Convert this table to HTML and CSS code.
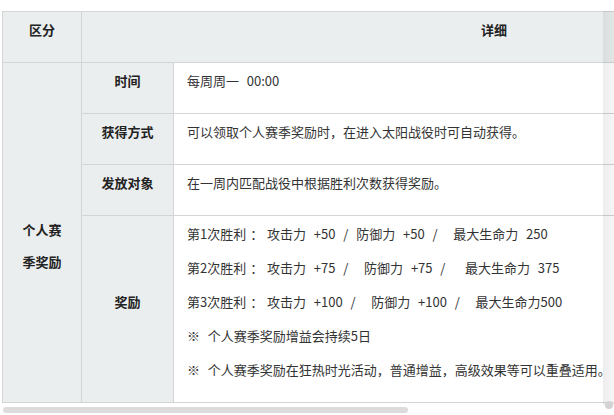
FILE: index.html
```html
<!DOCTYPE html>
<html lang="zh-CN">
<head>
<meta charset="utf-8">
<link rel="stylesheet" href="styles.css">
</head>
<body>
<div class="frame">
  <div class="scroller">
    <table class="info">
      <colgroup>
        <col class="c1"><col class="c2"><col class="c3">
      </colgroup>
      <tr class="head">
        <th class="lab"><p>区分</p></th>
        <th class="lab" colspan="2"><p>详细</p></th>
      </tr>
      <tr>
        <td class="lab group" rowspan="4"><p>个人赛</p><p>季奖励</p></td>
        <td class="lab"><p>时间</p></td>
        <td class="val"><p>每周周一&nbsp; 00:00</p></td>
      </tr>
      <tr>
        <td class="lab"><p>获得方式</p></td>
        <td class="val"><p>可以领取个人赛季奖励时，在进入太阳战役时可自动获得。</p></td>
      </tr>
      <tr>
        <td class="lab"><p>发放对象</p></td>
        <td class="val"><p>在一周内匹配战役中根据胜利次数获得奖励。</p></td>
      </tr>
      <tr>
        <td class="lab"><p>奖励</p></td>
        <td class="val">
          <p>第1次胜利 ： 攻击力&nbsp; +50&nbsp; /&nbsp; 防御力&nbsp; +50&nbsp; /&nbsp;&nbsp;&nbsp; 最大生命力&nbsp; 250</p>
          <p>第2次胜利 ： 攻击力&nbsp; +75&nbsp; /&nbsp;&nbsp;&nbsp; 防御力&nbsp; +75&nbsp; /&nbsp;&nbsp;&nbsp;&nbsp; 最大生命力&nbsp; 375</p>
          <p>第3次胜利 ： 攻击力&nbsp; +100&nbsp; /&nbsp;&nbsp;&nbsp; 防御力&nbsp; +100&nbsp; /&nbsp;&nbsp;&nbsp; 最大生命力500</p>
          <p>※&nbsp; 个人赛季奖励增益会持续5日</p>
          <p>※&nbsp; 个人赛季奖励在狂热时光活动，普通增益，高级效果等可以重叠适用。</p>
        </td>
      </tr>
    </table>
  </div>
  <div class="hbar"></div>
  <div class="fade"></div>
  <div class="dot"></div>
</div>
</body>
</html>
```

FILE: styles.css
```css
html, body {
  margin: 0;
  padding: 0;
  background: #fff;
}
body {
  font-family: "Noto Sans CJK SC", "Noto Sans", sans-serif;
  font-size: 13px;
  color: #333;
}
.frame {
  position: relative;
  width: 614px;
  height: 415px;
  padding-top: 11px;
  box-sizing: border-box;
  overflow: hidden;
}
.scroller {
  margin-left: 2px;
  width: 612px;
  overflow: hidden;
}
.hbar {
  margin: 4px 0 0 3px;
  width: 405px;
  height: 6px;
  border-radius: 3px;
  background: #dcdcdc;
}
.info {
  border-collapse: collapse;
  width: 905px;
  table-layout: fixed;
}
.c1 { width: 79px; }
.c2 { width: 92px; }
.info th, .info td {
  border: 1px solid #d2d4d5;
  padding: 8px 13px;
  vertical-align: middle;
}
.info p {
  margin: 0 0 15px;
  line-height: 19px;
  white-space: nowrap;
}
.lab {
  background: #ebeeef;
  font-weight: bold;
  color: #222;
  text-align: center;
}
.val {
  background: #fff;
  text-align: left;
  word-spacing: 1px;
}
.info td.group {
  padding-top: 48px;
}
.group p {
  line-height: 17px;
}
.fade {
  position: absolute;
  top: 11px;
  left: 603px;
  width: 11px;
  height: 394px;
  background: linear-gradient(to right, rgba(0,0,0,0.07), rgba(0,0,0,0.04));
}
.dot {
  position: absolute;
  left: 605px;
  top: 401px;
  width: 8px;
  height: 8px;
  border-radius: 50%;
  background: #d3d3d6;
}
```
